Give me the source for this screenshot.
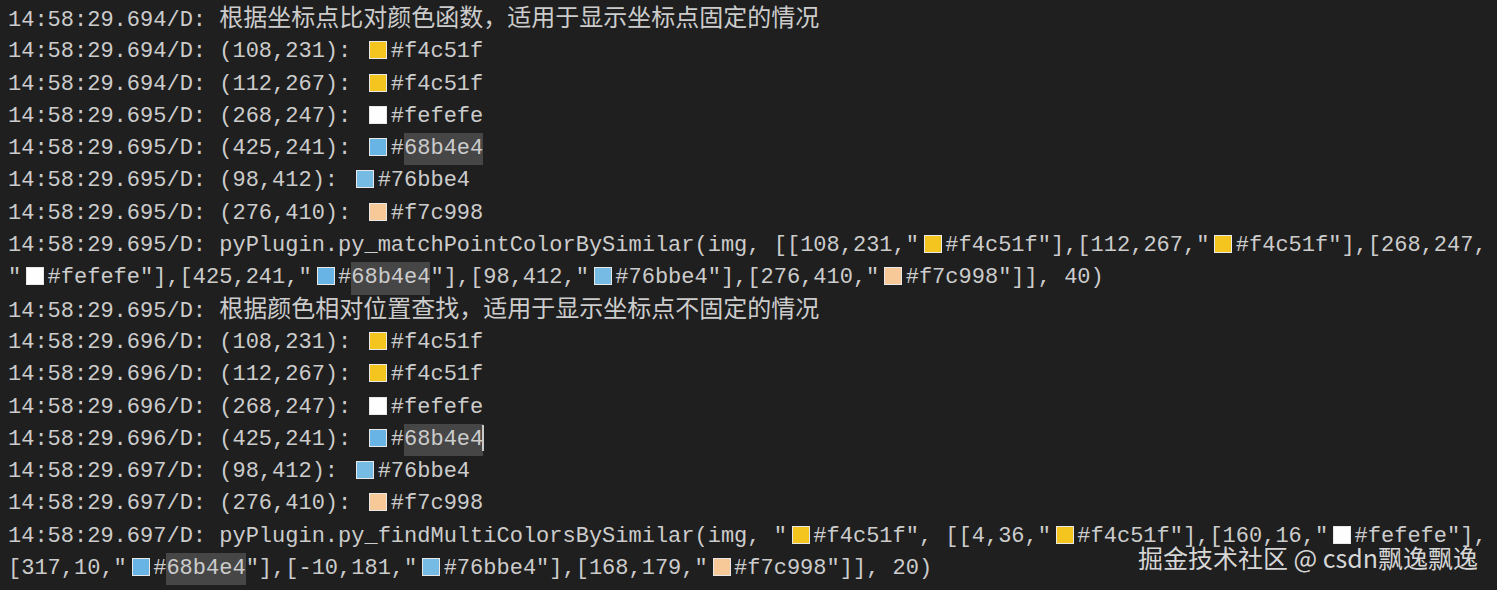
import React from 'react';

const lines = [
    '14:58:29.694/D: 根据坐标点比对颜色函数，适用于显示坐标点固定的情况',
    '14:58:29.694/D: (108,231): {f4c51f}#f4c51f',
    '14:58:29.694/D: (112,267): {f4c51f}#f4c51f',
    '14:58:29.695/D: (268,247): {fefefe}#fefefe',
    '14:58:29.695/D: (425,241): {68b4e4}#<68b4e4>',
    '14:58:29.695/D: (98,412): {76bbe4}#76bbe4',
    '14:58:29.695/D: (276,410): {f7c998}#f7c998',
    '14:58:29.695/D: pyPlugin.py_matchPointColorBySimilar(img, [[108,231,"{f4c51f}#f4c51f"],[112,267,"{f4c51f}#f4c51f"],[268,247,',
    '"{fefefe}#fefefe"],[425,241,"{68b4e4}#<68b4e4>"],[98,412,"{76bbe4}#76bbe4"],[276,410,"{f7c998}#f7c998"]], 40)',
    '14:58:29.695/D: 根据颜色相对位置查找，适用于显示坐标点不固定的情况',
    '14:58:29.696/D: (108,231): {f4c51f}#f4c51f',
    '14:58:29.696/D: (112,267): {f4c51f}#f4c51f',
    '14:58:29.696/D: (268,247): {fefefe}#fefefe',
    '14:58:29.696/D: (425,241): {68b4e4}#<68b4e4>|',
    '14:58:29.697/D: (98,412): {76bbe4}#76bbe4',
    '14:58:29.697/D: (276,410): {f7c998}#f7c998',
    '14:58:29.697/D: pyPlugin.py_findMultiColorsBySimilar(img, "{f4c51f}#f4c51f", [[4,36,"{f4c51f}#f4c51f"],[160,16,"{fefefe}#fefefe"],',
    '[317,10,"{68b4e4}#<68b4e4>"],[-10,181,"{76bbe4}#76bbe4"],[168,179,"{f7c998}#f7c998"]], 20)',
];

const swatchBg = {
    f4c51f: 'bg-[#f4c51f]',
    fefefe: 'bg-[#fefefe]',
    '68b4e4': 'bg-[#68b4e4]',
    '76bbe4': 'bg-[#76bbe4]',
    f7c998: 'bg-[#f7c998]',
};

const Swatch = ({ hex }) => (
    <span className={`inline-block w-[18px] h-[18px] ml-[5px] mr-[3.4px] align-[-2px] border border-[#e8e8e8] ${swatchBg[hex]}`} />
);

// CJK runs are set a bit larger (the editor falls back to a wider font for them)
const Plain = ({ text }) =>
    text.split(/([\u4e00-\u9fff，]+)/).map((part, i) =>
        /[\u4e00-\u9fff，]/.test(part) ? (
            <span key={i} className="text-[24px] leading-none font-['Noto_Sans_CJK_SC',sans-serif]">
                {part}
            </span>
        ) : (
            part
        )
    );

const Line = ({ text }) => {
    const parts = text.split(/(\{[0-9a-f]{6}\}|<[0-9a-f]{6}>|\|)/);
    return (
        <div className="whitespace-pre leading-[32.3px] h-[32.3px]">
            {parts.map((p, i) => {
                if (/^\{[0-9a-f]{6}\}$/.test(p)) return <Swatch key={i} hex={p.slice(1, -1)} />;
                if (/^<[0-9a-f]{6}>$/.test(p))
                    return (
                        <span key={i} className="inline-block bg-[#464646] leading-[32.3px]">
                            {p.slice(1, -1)}
                        </span>
                    );
                if (p === '|')
                    return <span key={i} className="inline-block w-[2px] h-[26px] -ml-[1px] align-[-6px] bg-[#c8c8c8]" />;
                return <Plain key={i} text={p} />;
            })}
        </div>
    );
};

const App = () => {
    return (
        <div className="relative w-[1497px] h-[590px] overflow-hidden bg-[#1f1f1f] text-[#cccccc] text-[22px] pl-[8px] pt-[4px] font-['Liberation_Mono','Noto_Sans_CJK_SC',monospace]">
            {lines.map((l, i) => (
                <Line key={i} text={l} />
            ))}
            {/* watermark */}
            <div className="absolute right-[19px] bottom-[18px] text-[25px] leading-[30px] text-[#d6d6d6] whitespace-pre font-['Noto_Sans_CJK_SC','Noto_Sans',sans-serif]">
                掘金技术社区 @ csdn飘逸飘逸
            </div>
        </div>
    );
};

export default App;
